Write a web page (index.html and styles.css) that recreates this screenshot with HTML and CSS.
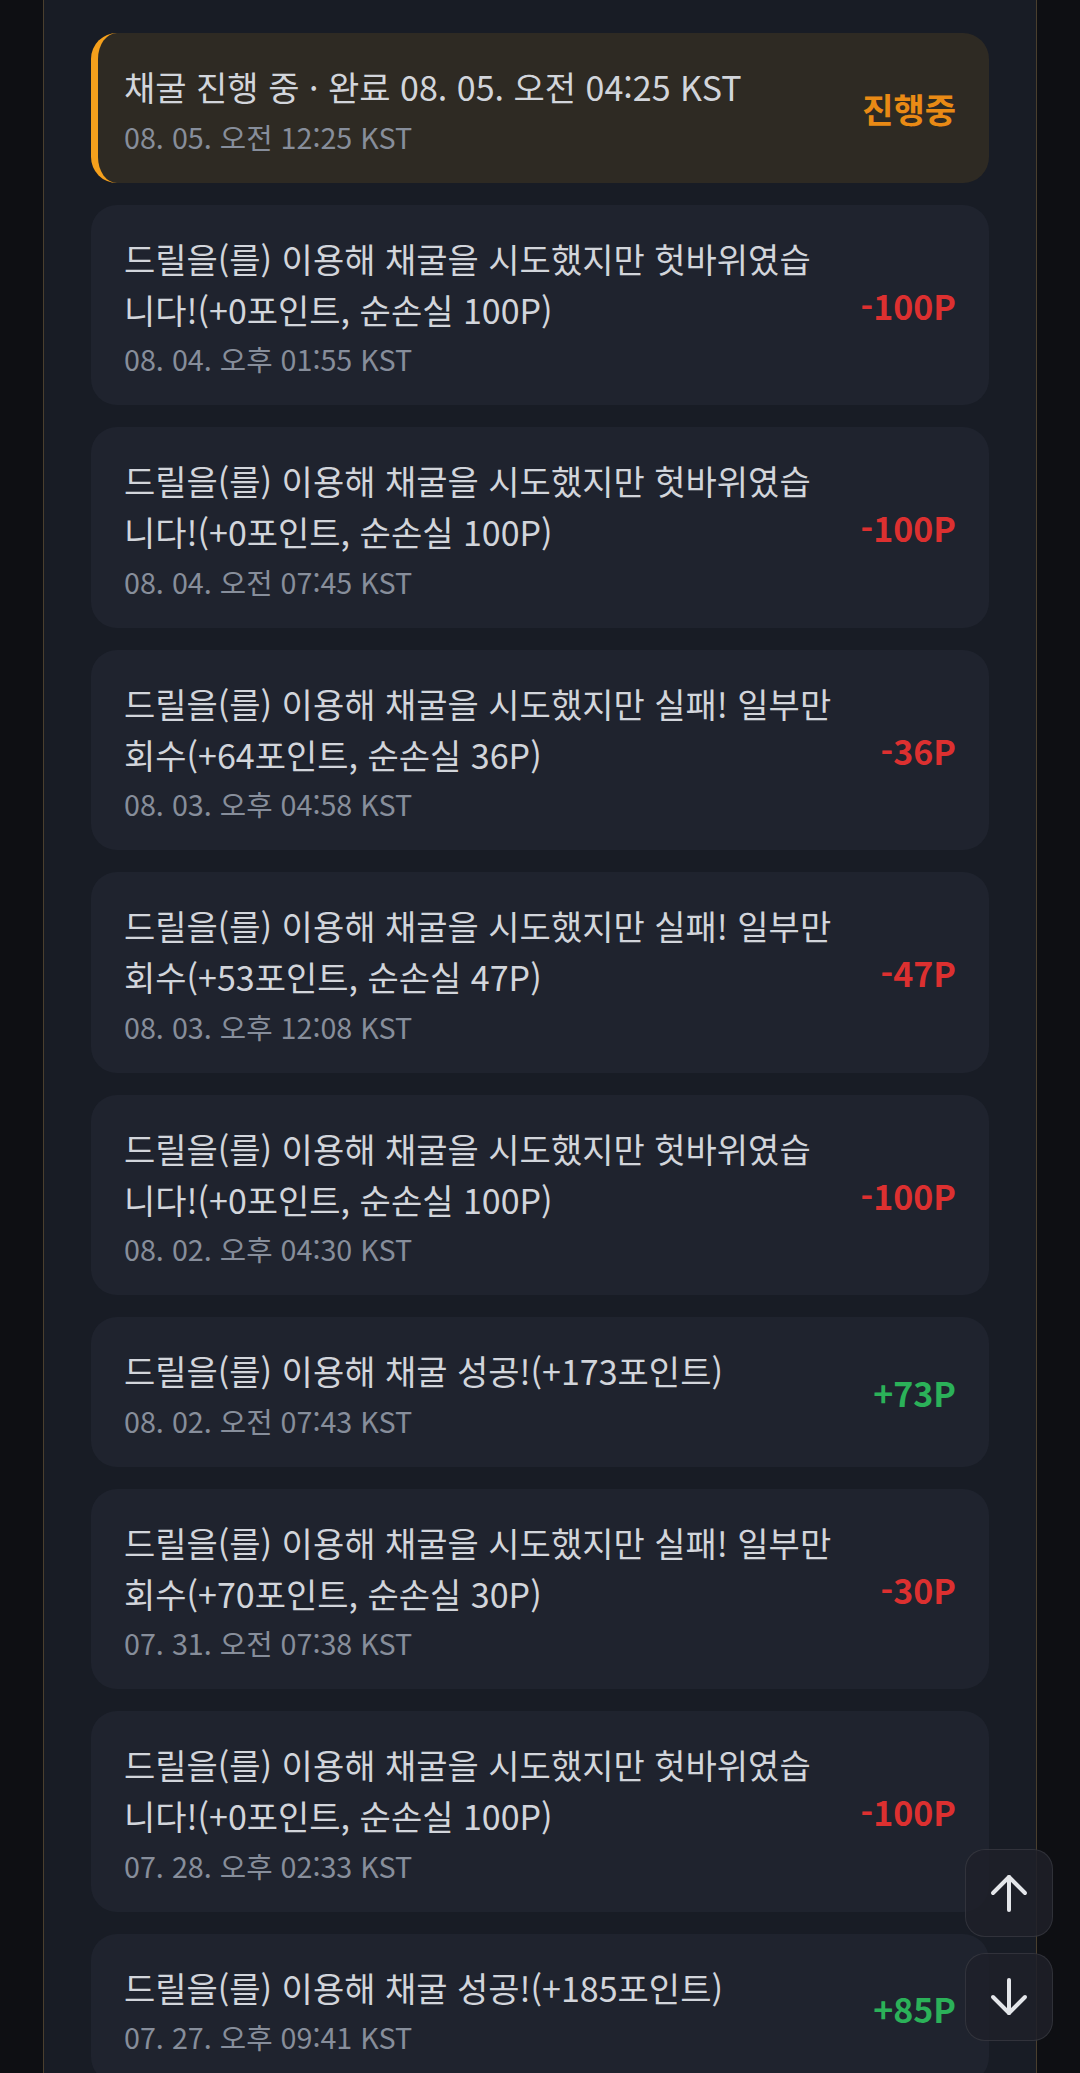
FILE: index.html
```html
<!DOCTYPE html>
<html lang="ko">
<head>
<meta charset="utf-8">
<title>채굴 기록</title>
<link rel="stylesheet" href="styles.css">
</head>
<body>
<div class="panel">
  <ul class="log">
    <li class="item active">
      <div class="info">
        <p class="title">채굴 진행 중 · 완료 08. 05. 오전 04:25 KST</p>
        <p class="date">08. 05. 오전 12:25 KST</p>
      </div>
      <span class="amount pending">진행중</span>
    </li>
    <li class="item">
      <div class="info">
        <p class="title">드릴을(를) 이용해 채굴을 시도했지만 헛바위였습니다!(+0포인트, 순손실 100P)</p>
        <p class="date">08. 04. 오후 01:55 KST</p>
      </div>
      <span class="amount loss">-100P</span>
    </li>
    <li class="item">
      <div class="info">
        <p class="title">드릴을(를) 이용해 채굴을 시도했지만 헛바위였습니다!(+0포인트, 순손실 100P)</p>
        <p class="date">08. 04. 오전 07:45 KST</p>
      </div>
      <span class="amount loss">-100P</span>
    </li>
    <li class="item">
      <div class="info">
        <p class="title">드릴을(를) 이용해 채굴을 시도했지만 실패! 일부만 회수(+64포인트, 순손실 36P)</p>
        <p class="date">08. 03. 오후 04:58 KST</p>
      </div>
      <span class="amount loss">-36P</span>
    </li>
    <li class="item">
      <div class="info">
        <p class="title">드릴을(를) 이용해 채굴을 시도했지만 실패! 일부만 회수(+53포인트, 순손실 47P)</p>
        <p class="date">08. 03. 오후 12:08 KST</p>
      </div>
      <span class="amount loss">-47P</span>
    </li>
    <li class="item">
      <div class="info">
        <p class="title">드릴을(를) 이용해 채굴을 시도했지만 헛바위였습니다!(+0포인트, 순손실 100P)</p>
        <p class="date">08. 02. 오후 04:30 KST</p>
      </div>
      <span class="amount loss">-100P</span>
    </li>
    <li class="item">
      <div class="info">
        <p class="title">드릴을(를) 이용해 채굴 성공!(+173포인트)</p>
        <p class="date">08. 02. 오전 07:43 KST</p>
      </div>
      <span class="amount gain">+73P</span>
    </li>
    <li class="item">
      <div class="info">
        <p class="title">드릴을(를) 이용해 채굴을 시도했지만 실패! 일부만 회수(+70포인트, 순손실 30P)</p>
        <p class="date">07. 31. 오전 07:38 KST</p>
      </div>
      <span class="amount loss">-30P</span>
    </li>
    <li class="item">
      <div class="info">
        <p class="title">드릴을(를) 이용해 채굴을 시도했지만 헛바위였습니다!(+0포인트, 순손실 100P)</p>
        <p class="date">07. 28. 오후 02:33 KST</p>
      </div>
      <span class="amount loss">-100P</span>
    </li>
    <li class="item">
      <div class="info">
        <p class="title">드릴을(를) 이용해 채굴 성공!(+185포인트)</p>
        <p class="date">07. 27. 오후 09:41 KST</p>
      </div>
      <span class="amount gain">+85P</span>
    </li>
  </ul>
</div>
<div class="scroll-btns">
  <button class="scroll-btn" type="button" aria-label="위로">
    <svg viewBox="0 0 40 40" width="40" height="40" fill="none" stroke="currentColor" stroke-width="4" stroke-linecap="round" stroke-linejoin="round"><path d="M20 4V37"/><path d="M4 20L20 4L36 20"/></svg>
  </button>
  <button class="scroll-btn" type="button" aria-label="아래로">
    <svg viewBox="0 0 40 40" width="40" height="40" fill="none" stroke="currentColor" stroke-width="4" stroke-linecap="round" stroke-linejoin="round"><path d="M20 3V36"/><path d="M4 20L20 36L36 20"/></svg>
  </button>
</div>
</body>
</html>
```

FILE: styles.css
```css
* { box-sizing: border-box; }

html, body {
  margin: 0;
  padding: 0;
  background: #0e0f13;
  height: 2073px;
  overflow: hidden;
  font-family: "Noto Sans CJK KR", "Noto Sans", sans-serif;
}

.panel {
  margin: 0 43px;
  height: 2073px;
  background: #181c25;
  border-left: 1px solid #4a3f2e;
  border-right: 1px solid #4a3f2e;
  padding: 33px 47px 0;
  overflow: hidden;
}

.log {
  list-style: none;
  margin: 0;
  padding: 0;
  display: flex;
  flex-direction: column;
  gap: 22px;
}

.item {
  display: flex;
  align-items: center;
  gap: 32px;
  background: #1f232e;
  border-radius: 26px;
  padding: 28px 33px 26px 33px;
}

.item.active {
  background: #2e2a23;
  border-left: 7px solid #f5a01c;
  padding-left: 26px;
}

.info {
  flex: 1;
  min-width: 0;
}

.title {
  margin: 0;
  font-size: 34px;
  line-height: 51px;
  color: #d2d5db;
}

.date {
  margin: 4.5px 0 0;
  font-size: 28.7px;
  line-height: 40px;
  color: #878e9b;
}

.amount {
  flex: none;
  font-size: 34px;
  font-weight: 700;
  line-height: 40px;
}

.amount.loss { color: #dc3030; }
.amount.gain { color: #2bb159; }
.amount.pending { color: #e98a15; }

.scroll-btns {
  position: fixed;
  right: 27px;
  bottom: 32px;
  display: flex;
  flex-direction: column;
  gap: 16px;
}

.scroll-btn {
  width: 88px;
  height: 88px;
  border-radius: 20px;
  background: rgba(30, 32, 41, 0.85);
  border: 1.5px solid rgba(255, 255, 255, 0.09);
  color: #e4e6ea;
  display: flex;
  align-items: center;
  justify-content: center;
  padding: 0;
}
```
